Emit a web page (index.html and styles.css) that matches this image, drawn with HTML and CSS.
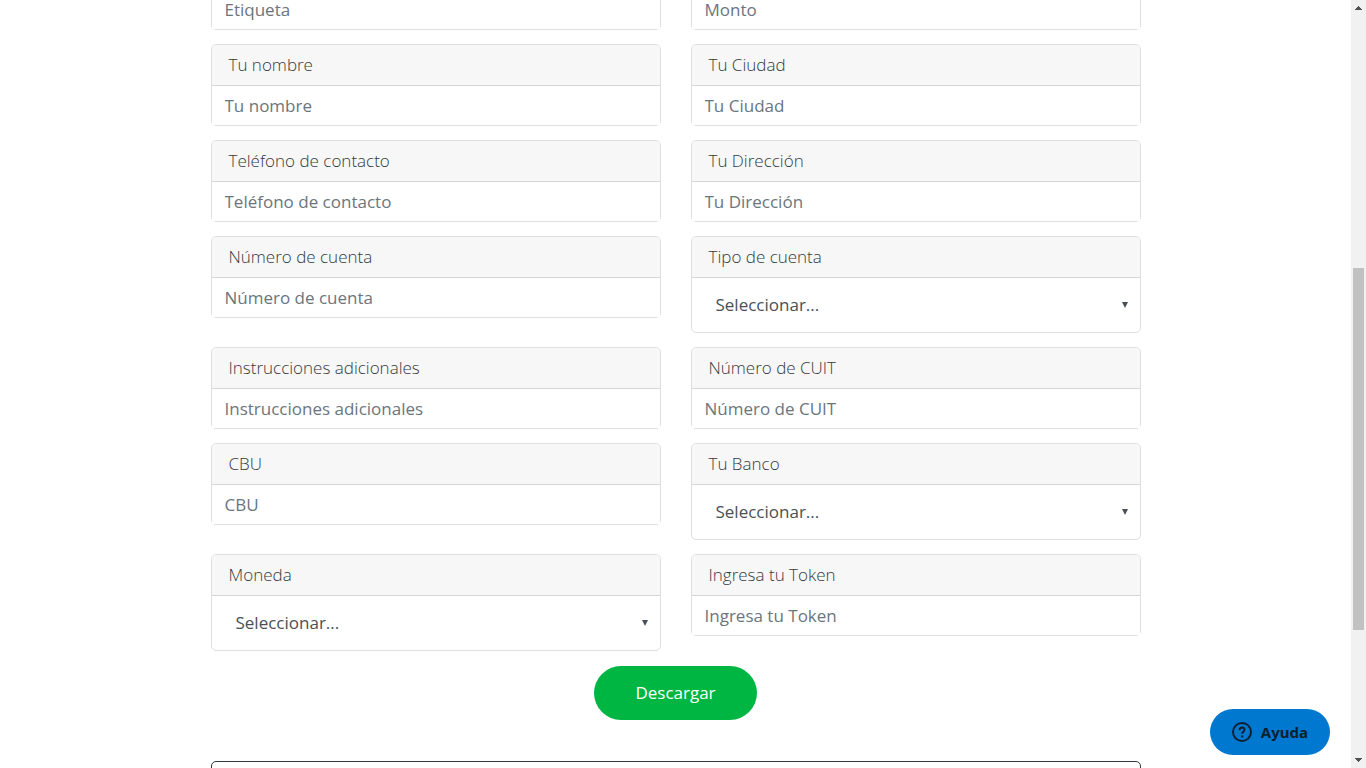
FILE: index.html
```html
<!DOCTYPE html>
<html lang="es">
<head>
<meta charset="utf-8">
<meta name="viewport" content="width=device-width, initial-scale=1">
<title>Descargar</title>
<link rel="stylesheet" href="styles.css">
</head>
<body>
<div class="viewport">
  <main class="page">
    <form class="form">
      <div class="grid">
        <div class="card card-cut"><input class="field" type="text" placeholder="Etiqueta" aria-label="Etiqueta"></div>
        <div class="card card-cut"><input class="field" type="text" placeholder="Monto" aria-label="Monto"></div>

        <div class="card"><label class="card-title" for="nombre">Tu nombre</label><input class="field" id="nombre" type="text" placeholder="Tu nombre"></div>
        <div class="card"><label class="card-title" for="ciudad">Tu Ciudad</label><input class="field" id="ciudad" type="text" placeholder="Tu Ciudad"></div>

        <div class="card"><label class="card-title" for="telefono">Teléfono de contacto</label><input class="field" id="telefono" type="text" placeholder="Teléfono de contacto"></div>
        <div class="card"><label class="card-title" for="direccion">Tu Dirección</label><input class="field" id="direccion" type="text" placeholder="Tu Dirección"></div>

        <div class="card"><label class="card-title" for="cuenta">Número de cuenta</label><input class="field" id="cuenta" type="text" placeholder="Número de cuenta"></div>
        <div class="card"><label class="card-title" for="tipo">Tipo de cuenta</label><div class="picker"><select class="select" id="tipo"><option>Seleccionar...</option></select><svg class="arrow" viewBox="0 0 6 6" aria-hidden="true"><path d="M0 0h6L3 6z"/></svg></div></div>

        <div class="card"><label class="card-title" for="instrucciones">Instrucciones adicionales</label><input class="field" id="instrucciones" type="text" placeholder="Instrucciones adicionales"></div>
        <div class="card"><label class="card-title" for="cuit">Número de CUIT</label><input class="field" id="cuit" type="text" placeholder="Número de CUIT"></div>

        <div class="card"><label class="card-title" for="cbu">CBU</label><input class="field" id="cbu" type="text" placeholder="CBU"></div>
        <div class="card"><label class="card-title" for="banco">Tu Banco</label><div class="picker"><select class="select" id="banco"><option>Seleccionar...</option></select><svg class="arrow" viewBox="0 0 6 6" aria-hidden="true"><path d="M0 0h6L3 6z"/></svg></div></div>

        <div class="card"><label class="card-title" for="moneda">Moneda</label><div class="picker"><select class="select" id="moneda"><option>Seleccionar...</option></select><svg class="arrow" viewBox="0 0 6 6" aria-hidden="true"><path d="M0 0h6L3 6z"/></svg></div></div>
        <div class="card"><label class="card-title" for="token">Ingresa tu Token</label><input class="field" id="token" type="text" placeholder="Ingresa tu Token"></div>
      </div>
      <button class="submit" type="button">Descargar</button>
    </form>
    <section class="panel"></section>
  </main>
  <div class="scrollbar" aria-hidden="true">
    <svg class="scroll-arrow" viewBox="0 0 7 4"><path d="M3 0h1v1h1v1h1v1h1v1H0V3h1V2h1V1h1z"/></svg>
    <div class="track"><div class="thumb"></div></div>
    <svg class="scroll-arrow" viewBox="0 0 7 4"><path d="M0 0h7v1H6v1H5v1H4v1H3V3H2V2H1V1H0z"/></svg>
  </div>
</div>
<button class="help" type="button">
  <svg class="help-icon" viewBox="0 0 20 20" aria-hidden="true"><circle cx="10" cy="10" r="9"/><path d="M7.6 8.2c0-1.6 1-2.6 2.5-2.6s2.4.9 2.4 2.2c0 1.9-2.3 2-2.3 4"/><path d="M10.2 13.4v2"/></svg>
  <span>Ayuda</span>
</button>
</body>
</html>
```

FILE: styles.css
```css
* {
  box-sizing: border-box;
}

body {
  margin: 0;
  background: #fff;
  color: #495057;
  font-family: "Open Sans", sans-serif;
  font-size: 17px;
  line-height: 26px;
}

input,
select,
button {
  margin: 0;
  border: 0;
  font: inherit;
}

.viewport {
  display: flex;
  height: 100vh;
  overflow: hidden;
}

.page {
  flex: 1;
  min-width: 0;
}

.form,
.panel {
  max-width: 930px;
  margin: 0 auto;
}

.form {
  display: flex;
  flex-direction: column;
  align-items: center;
  gap: 15px;
}

.grid {
  display: grid;
  grid-template-columns: 1fr 1fr;
  gap: 14px 30px;
  align-items: start;
  width: 100%;
}

.card {
  display: flex;
  flex-direction: column;
  border: 1px solid #dfdfdf;
  border-radius: 5px;
}

.card-cut {
  margin-top: -10px;
  border-top: 0;
}

.card-title {
  padding: 7px 17px;
  border-bottom: 1px solid #d6d6d6;
  border-radius: 4px 4px 0 0;
  background: #f7f7f7;
  color: #343a40;
  font-weight: 300;
}

.field {
  width: 100%;
  height: 39px;
  padding: 0 13px;
  background: #fff;
  color: #495057;
}

.field::placeholder {
  color: #6c757d;
  opacity: 1;
}

.picker {
  display: grid;
  align-items: center;
}

.select,
.arrow {
  grid-area: 1 / 1;
}

.select {
  width: 100%;
  height: 54px;
  padding: 0 24px;
  border-radius: 4px;
  appearance: none;
  background: transparent;
  color: #495057;
}

.arrow {
  justify-self: end;
  width: 6px;
  height: 6px;
  margin-right: 12px;
  fill: #495057;
  pointer-events: none;
}

.submit {
  padding: 14px 41px;
  border-radius: 27px;
  background: #00b642;
  color: #fff;
}

.panel {
  height: 80px;
  margin-top: 41px;
  border: 1px solid #343a40;
  border-radius: 5px;
}

.scrollbar {
  display: flex;
  flex-direction: column;
  align-items: center;
  justify-content: space-between;
  width: 15px;
  padding: 6px 0;
  background: #f1f1f1;
}

.scroll-arrow {
  width: 7px;
  height: 4px;
  fill: #505050;
}

.track {
  flex: 1;
  width: 11px;
  padding-top: 258px;
}

.thumb {
  height: 362px;
  background: #c1c1c1;
}

.help {
  position: fixed;
  right: 36px;
  bottom: 13px;
  display: flex;
  align-items: center;
  gap: 9px;
  height: 46px;
  padding: 0 22px;
  border-radius: 23px;
  background: #0078d0;
  color: #0b2030;
  font-family: "Noto Sans", sans-serif;
  font-size: 15px;
  font-weight: 700;
}

.help-icon {
  width: 20px;
  height: 20px;
  fill: none;
  stroke: #0b2030;
  stroke-width: 2;
}
```
